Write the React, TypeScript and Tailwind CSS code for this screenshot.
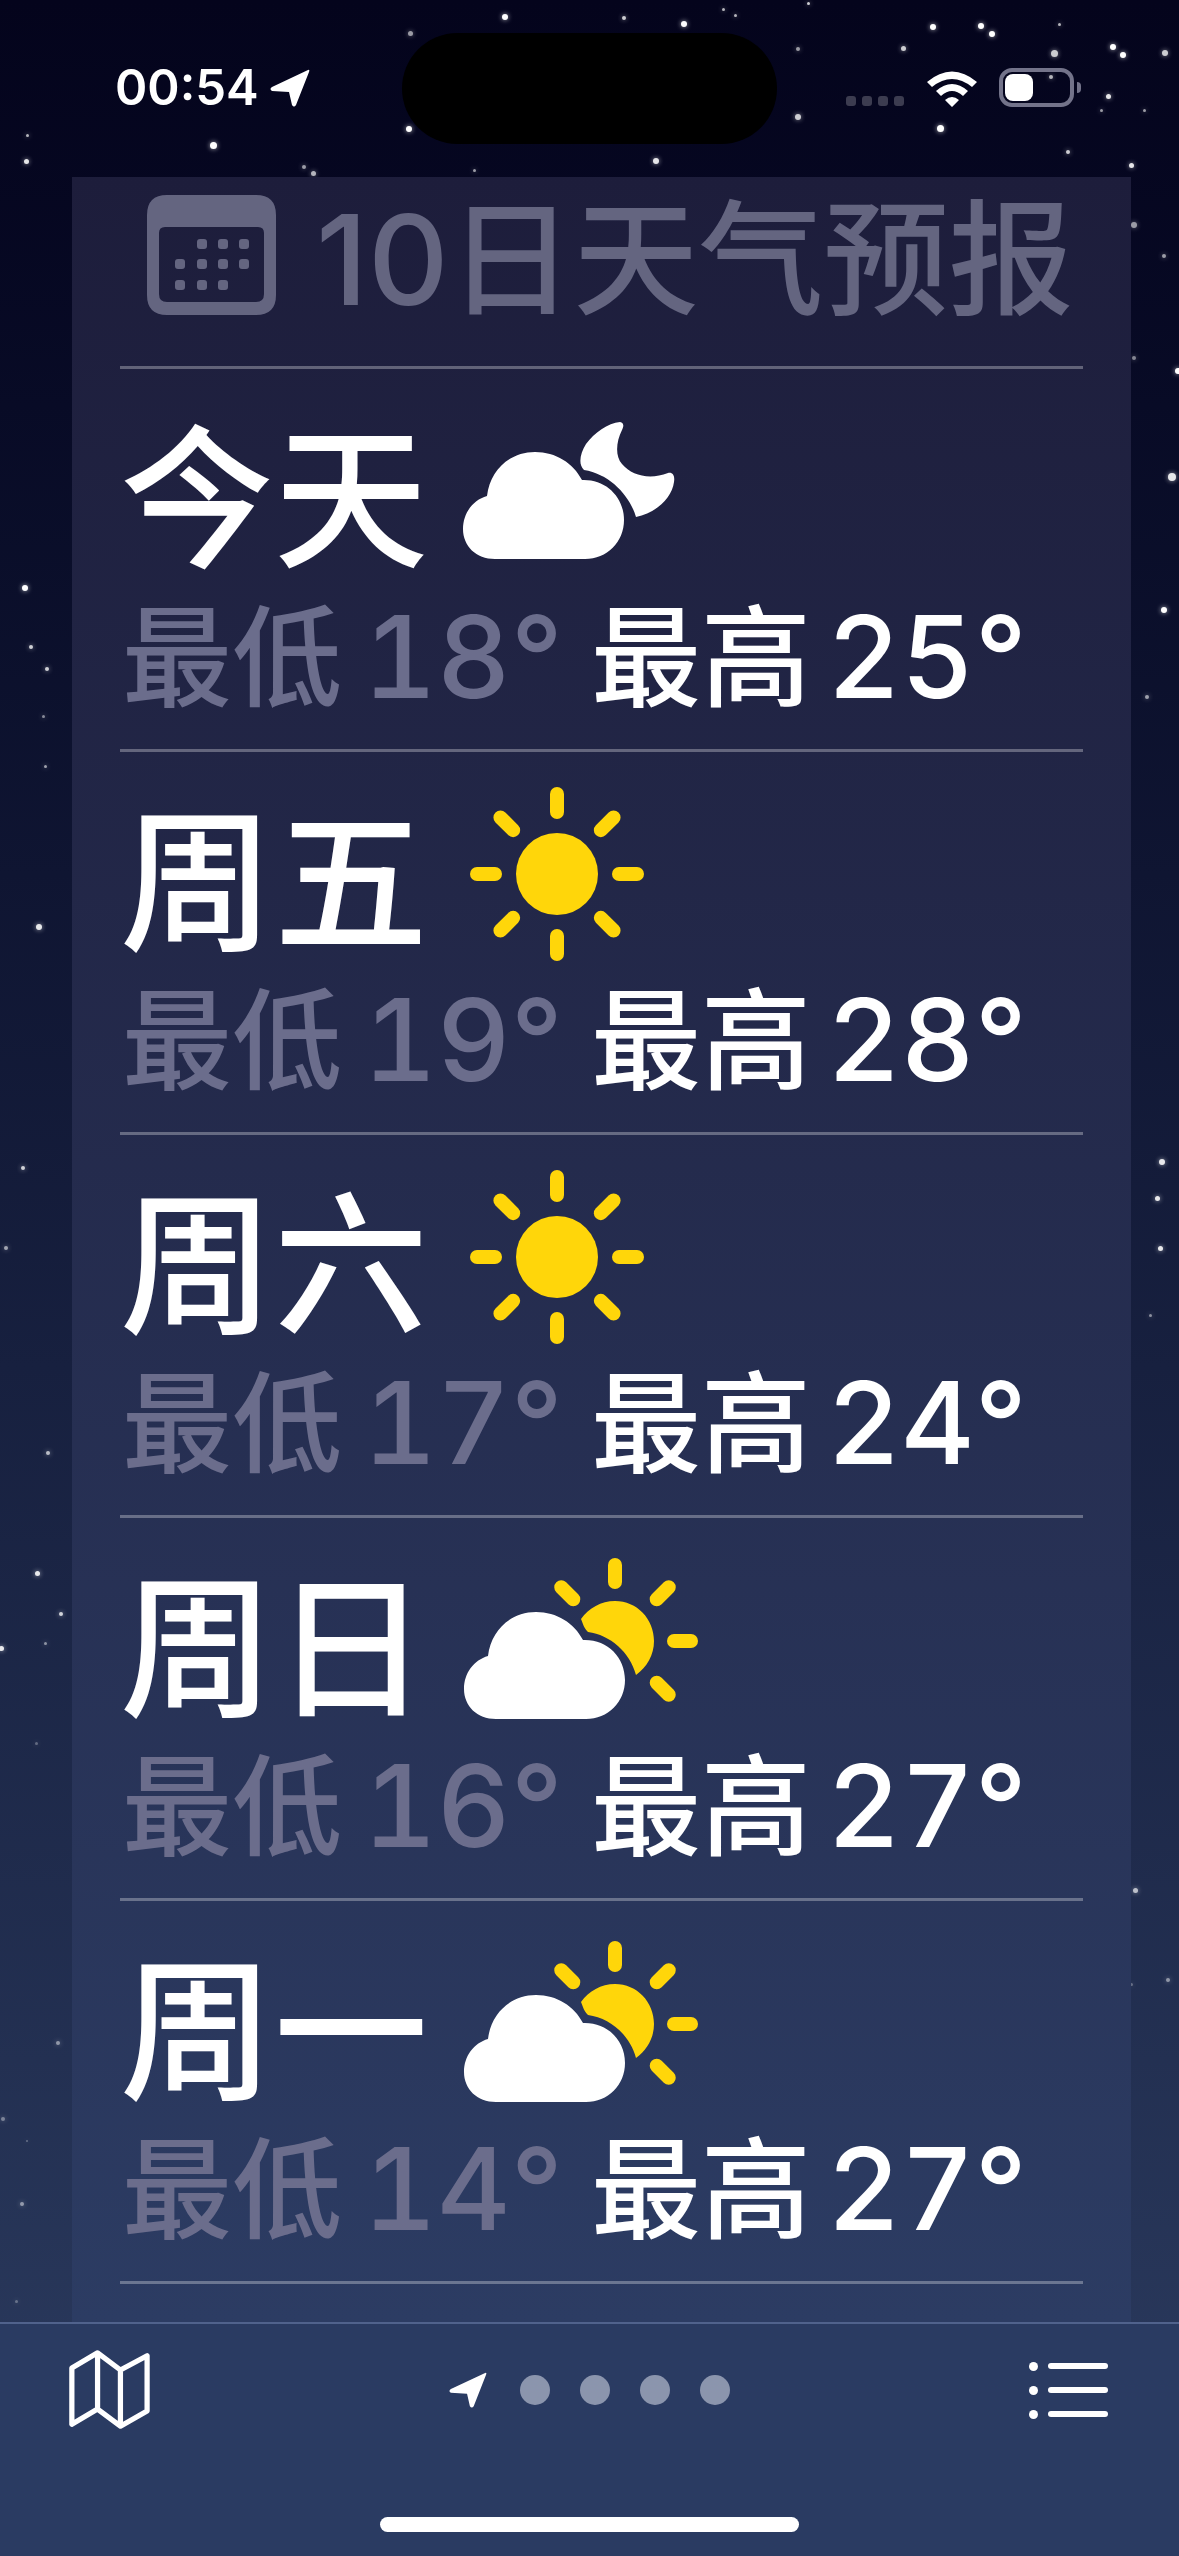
const font = { fontFamily: 'Inter, "Noto Sans CJK SC", sans-serif' };

const rows = [
  { day: '今天', low: 18, high: 25, icon: 'moon' },
  { day: '周五', low: 19, high: 28, icon: 'sun' },
  { day: '周六', low: 17, high: 24, icon: 'sun' },
  { day: '周日', low: 16, high: 27, icon: 'partly' },
  { day: '周一', low: 14, high: 27, icon: 'partly' },
];

const cloud = 'M35 141 C16 141 3 128 3 111 C3 95 13 82 27 78 C30 52 50 34 75 34 C96 34 113 45 122 62 C146 61 164 79 164 102 C164 124 147 141 125 141 Z';

function Rays({ cx, cy, angles, inner, outer }: { cx: number; cy: number; angles: number[]; inner: number; outer: number }) {
  return (
    <g stroke="#ffd60a" strokeWidth="14" strokeLinecap="round">
      {angles.map(a => {
        const r = (a * Math.PI) / 180;
        return (
          <line
            key={a}
            x1={cx + Math.cos(r) * inner}
            y1={cy + Math.sin(r) * inner}
            x2={cx + Math.cos(r) * outer}
            y2={cy + Math.sin(r) * outer}
          />
        );
      })}
    </g>
  );
}

function WeatherIcon({ type }: { type: string }) {
  return (
    <svg width="230" height="170" viewBox="0 0 230 170" className="mt-[49px] shrink-0 overflow-visible">
      {type === 'sun' && (
        <>
          <Rays cx={97} cy={73} angles={[0, 45, 90, 135, 180, 225, 270, 315]} inner={62} outer={80} />
          <circle cx="97" cy="73" r="41" fill="#ffd60a" />
        </>
      )}
      {type === 'moon' && (
        <>
          <path
            d="M160 4 C164 5 164 8 162 12 C156 24 155 38 162 46 C172 58 190 62 208 55 C213 54 215 58 214 64 C212 80 196 95 176 99 C170 78 150 56 124 52 C118 46 120 36 126 26 C134 15 148 5 160 4 Z"
            fill="#fff"
          />
          <path d={cloud} fill="#fff" />
        </>
      )}
      {type === 'partly' && (
        <>
          <Rays cx={155} cy={74} angles={[-135, -90, -45, 0, 45]} inner={59} outer={76} />
          <path d="M121 52 C129 41 141 34 155 34 C177 34 194 52 194 74 C194 88 187 100 176 108 C170 85 150 68 128 65 C124 61 123 57 121 52 Z" fill="#ffd60a" />
          <path d={cloud} fill="#fff" transform="translate(1 11)" />
        </>
      )}
    </svg>
  );
}

// x, y, r, opacity
const stars = [
  [505, 17, 3, 1], [624, 18, 2, 0.8], [684, 24, 3, 1], [723, 9, 1.5, 0.7], [735, 15, 1.5, 0.7], [808, 3, 1.5, 0.8],
  [933, 27, 3, 1], [981, 26, 3, 1], [992, 34, 3, 1], [1059, 24, 1.5, 0.7], [1113, 47, 3, 1], [1123, 55, 3, 1], [1165, 53, 3, 0.8], [1054, 53, 3.5, 0.8],
  [410, 33, 2.5, 0.6], [798, 49, 2, 0.6], [903, 48, 2.5, 0.8], [409, 129, 3, 1], [213, 145, 3.5, 1], [27, 135, 1.5, 0.7], [26, 161, 2.5, 0.9],
  [656, 161, 3, 0.9], [798, 117, 3, 0.8], [940, 128, 3.5, 1], [1068, 152, 2, 0.8], [1108, 96, 2.5, 0.9], [1101, 110, 1.5, 0.6], [1144, 110, 1.5, 0.6], [1131, 165, 2.5, 0.9],
  [304, 167, 2, 0.6], [313, 173, 2.5, 0.7], [474, 170, 1.5, 0.6], [1051, 77, 2, 0.7],
  [25, 588, 3, 1], [31, 647, 2, 0.8], [47, 669, 2, 0.8], [43, 716, 1.5, 0.5], [45, 766, 1.5, 0.6],
  [39, 927, 3, 0.9], [23, 1168, 2, 0.8], [6, 1248, 2, 0.6], [48, 1453, 2, 0.7],
  [37, 1573, 2.5, 0.9], [61, 1614, 2, 0.8], [1, 1648, 2.5, 0.9], [45, 1643, 1.5, 0.5], [36, 1743, 1.5, 0.3], [58, 2043, 2, 0.5], [3, 2119, 2, 0.4], [27, 2141, 1, 0.3], [22, 2204, 2, 0.5], [16, 2301, 1.5, 0.3],
  [1134, 225, 3, 0.6], [1164, 256, 2, 0.6], [1134, 358, 2, 0.5], [1178, 371, 3, 1], [1172, 477, 4, 0.9], [1164, 610, 3, 1], [1147, 697, 2, 0.6],
  [1162, 1162, 3, 0.9], [1157, 1198, 2.5, 0.9], [1160, 1248, 2.5, 0.9], [1150, 1315, 1.5, 0.5],
  [1135, 1890, 2.5, 0.7], [1168, 1980, 2, 0.5], [1131, 1984, 1.5, 0.3],
];

function Star({ x, y, r, o }: { x: number; y: number; r: number; o: number }) {
  return (
    <div
      className="absolute rounded-full bg-white shadow-[0_0_5px_rgba(255,255,255,0.7)]"
      style={{ left: x - r, top: y - r, width: r * 2, height: r * 2, opacity: o }}
    />
  );
}

function Row({ day, low, high, icon }: { day: string; low: number; high: number; icon: string }) {
  return (
    <div className="h-[383px] border-b-[3px] border-white/30">
      <div className="flex h-[223px] items-start">
        <div className="mt-[43px] w-[340px] text-[154px] leading-[176px] font-medium text-white">{day}</div>
        <WeatherIcon type={icon} />
      </div>
      <div className="flex text-[110px] leading-[130px] font-medium">
        <div className="w-[471px] pl-[2px] text-[#6b6d8c]">
          最低<span className="ml-[21px] text-[114px] tabular-nums">{low}°</span>
        </div>
        <div className="text-white">
          最高<span className="ml-[16px] text-[114px] tabular-nums">{high}°</span>
        </div>
      </div>
    </div>
  );
}

export default function App() {
  return (
    <div
      className="relative flex h-[2556px] w-[1179px] flex-col overflow-hidden bg-gradient-to-b from-[#04041c] to-[#2c3c60]"
      style={font}
    >
      {stars.map(([x, y, r, o], i) => (
        <Star key={i} x={x} y={y} r={r} o={o} />
      ))}

      {/* status bar */}
      <div className="relative flex h-[177px] shrink-0 items-start">
        <div className="mt-[58px] ml-[115px] flex items-center gap-[11px]">
          <span className="text-[49px] leading-[60px] font-semibold text-white">00:54</span>
          <svg width="40" height="38" viewBox="0 0 40 38">
            <path d="M38 1 L2 18 Q-1 20 2 22 L19 23 L22 36 Q24 39 26 36 L39 3 Q40 0 38 1 Z" fill="#fff" />
          </svg>
        </div>
        <div className="absolute top-[33px] left-[402px] h-[111px] w-[375px] rounded-[56px] bg-black" />
        <div className="absolute top-[68px] left-[846px] flex items-end">
          <div className="mr-[23px] mb-[1px] flex gap-[6px]">
            <div className="size-[10px] rounded-[3px] bg-[#3c3c50]" />
            <div className="size-[10px] rounded-[3px] bg-[#3c3c50]" />
            <div className="size-[10px] rounded-[3px] bg-[#3c3c50]" />
            <div className="size-[10px] rounded-[3px] bg-[#3c3c50]" />
          </div>
          <svg width="50" height="38" viewBox="0 0 50 38" className="mr-[22px]">
            <path d="M0 13 Q25 -8 50 13 L45 18 Q25 2 5 18 Z M9 22 Q25 8 41 22 L36 27 Q25 17 14 27 Z M18 31 Q25 25 32 31 L25 38 Z" fill="#fff" />
          </svg>
          <div className="flex items-center">
            <div className="h-[39px] w-[75px] rounded-[13px] border-[4px] border-[#73738a] p-[2px]">
              <div className="h-full w-[28px] rounded-[8px] bg-white" />
            </div>
            <div className="ml-[3px] h-[11px] w-[4px] rounded-r-full bg-[#73738a]" />
          </div>
        </div>
      </div>

      {/* forecast panel */}
      <div className="relative mr-[48px] ml-[72px] min-h-0 flex-1 overflow-hidden bg-gradient-to-b from-[#1d1d3b] to-[#2c3c63] px-[48px]">
        <div className="flex h-[192px] items-start border-b-[3px] border-white/30 pl-[27px]">
          <svg width="129" height="120" viewBox="0 0 129 120" className="mt-[18px] shrink-0">
            <path fillRule="evenodd" d="M20 0 H109 Q129 0 129 20 V100 Q129 120 109 120 H20 Q0 120 0 100 V20 Q0 0 20 0 Z M18 32 Q12 32 12 38 V99 Q12 107 20 107 H109 Q117 107 117 99 V38 Q117 32 111 32 Z" fill="#646580" />
            {[[50, 44], [71, 44], [92, 44], [28, 64], [50, 64], [71, 64], [92, 64], [28, 85], [50, 85], [71, 85]].map(([x, y]) => (
              <rect key={`${x}-${y}`} x={x} y={y} width="10" height="10" rx="3" fill="#646580" />
            ))}
          </svg>
          <div className="ml-[40px] text-[125px] leading-[166px] font-medium whitespace-nowrap text-[#646580]">10日天气预报</div>
        </div>
        {rows.map(r => (
          <Row key={r.day} {...r} />
        ))}
      </div>

      {/* bottom bar */}
      <div className="relative h-[234px] shrink-0 border-t-2 border-[#50628c] bg-[#2a3b62]">
        <div className="flex h-[132px] items-center justify-between pr-[71px] pl-[68px]">
          <svg width="82" height="80" viewBox="0 0 86 84" fill="none" stroke="#fff" strokeWidth="5.5" strokeLinejoin="round">
            <path d="M4 19 L31 3 L55 21 L83 6 V64 L55 80 L31 62 L4 78 Z M31 3 V62 M55 21 V80" />
          </svg>
          <div className="flex items-center gap-[30px]">
            <svg width="38" height="38" viewBox="0 0 40 38" className="mr-[3px]">
              <path d="M38 1 L2 18 Q-1 20 2 22 L19 23 L22 36 Q24 39 26 36 L39 3 Q40 0 38 1 Z" fill="#fff" />
            </svg>
            <div className="size-[30px] rounded-full bg-[#8b95ad]" />
            <div className="size-[30px] rounded-full bg-[#8b95ad]" />
            <div className="size-[30px] rounded-full bg-[#8b95ad]" />
            <div className="size-[30px] rounded-full bg-[#8b95ad]" />
          </div>
          <div className="flex flex-col gap-[15px]">
            {[0, 1, 2].map(i => (
              <div key={i} className="flex items-center gap-[10px]">
                <div className="size-[9px] rounded-full bg-white" />
                <div className="h-[6px] w-[60px] rounded-full bg-white" />
              </div>
            ))}
          </div>
        </div>
        <div className="mx-auto mt-[61px] h-[15px] w-[419px] rounded-full bg-white" />
      </div>
    </div>
  );
}
